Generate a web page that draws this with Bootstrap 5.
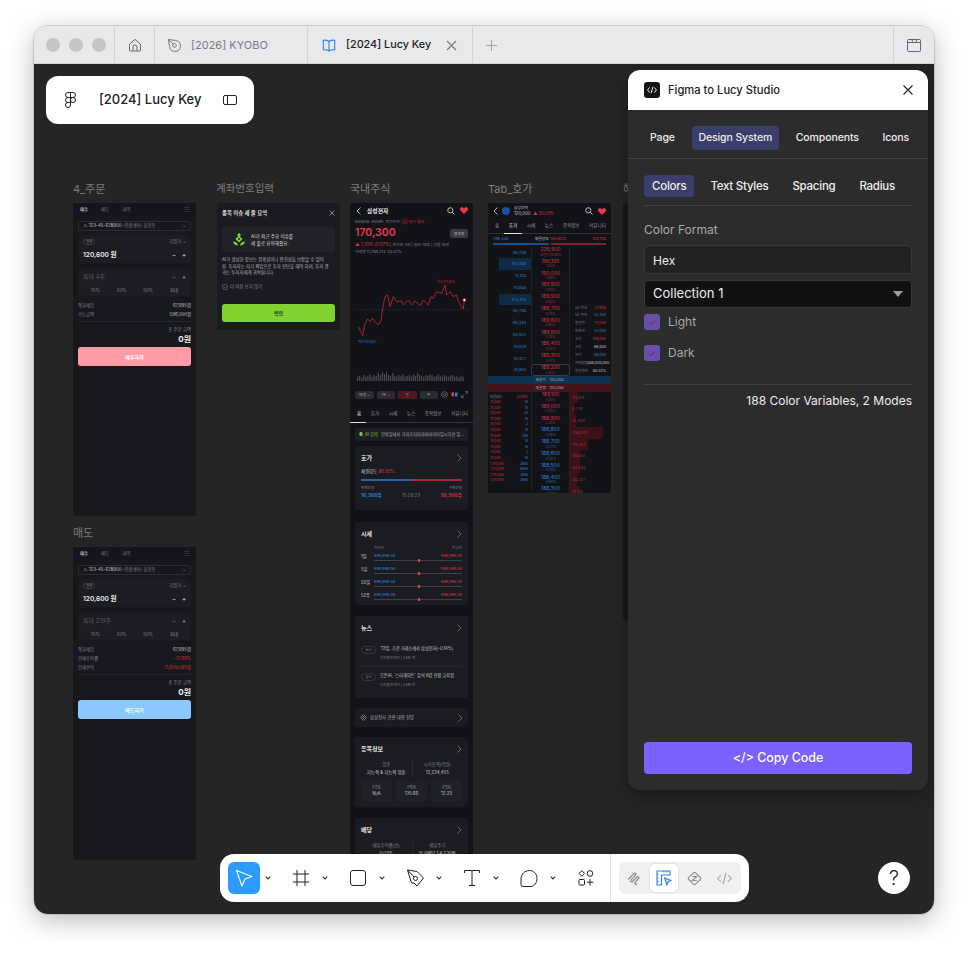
<!DOCTYPE html>
<html lang="ko">
<head>
<meta charset="UTF-8">
<title>[2024] Lucy Key</title>
<link href="https://cdn.jsdelivr.net/npm/bootstrap@5.3.0/dist/css/bootstrap.min.css" rel="stylesheet">
<style>
body { margin: 0; padding: 26px 34px; background: #fff; font-family: Inter, "Noto Sans CJK KR", sans-serif; }
svg { display: block; flex-shrink: 0; }
.app-window { width: 900px; height: 888px; border-radius: 14px; overflow: hidden; box-shadow: 0 6px 26px rgba(0,0,0,.28), 0 0 0 1px rgba(0,0,0,.12); }
.tabbar { height: 38px; padding-top: 1px; background: #e8e9eb; border-bottom: 1px solid #d2d3d5; font-size: 11px; }
.tb-cell { height: 100%; border-right: 1px solid #d2d3d5; }
.tb-lights { width: 81px; gap: 9px; padding-left: 12px; }
.tb-light { width: 14px; height: 14px; border-radius: 50%; background: #c4c5c7; }
.tb-home { width: 40px; }
.tb-tab1 { width: 153px; padding-left: 12px; gap: 9px; color: #7b7c7e; }
.tb-tab2 { width: 165px; padding-left: 14px; color: #222; font-weight: 500; font-size: 10.8px; }
.tb-tab2 .tab-title { margin-left: 10px; width: 100px; white-space: nowrap; }
.tb-right { width: 41px; border-left: 1px solid #d2d3d5; }
.stage { position: relative; height: 850px; background: #252525; overflow: hidden; }

.fr-wrap { position: absolute; width: 123px; top: 115px; }
.fr-label { font-size: 11px; line-height: 20px; height: 24px; color: #7d7d7d; white-space: nowrap; }
.fr { background: #17181c; border-radius: 2px; overflow: hidden; color: #c9cacc; font-size: 4.4px; line-height: 6px; white-space: nowrap; }
.fw-1 { left: 39px; } .fw-1 .fr { height: 313px; }
.fw-2 { left: 39px; top: 459px; } .fw-2 .fr { height: 313px; }
.fw-3 { left: 183px; } .fw-3 .fr { height: 127px; padding: 0 5px; background: #1a1b20; }
.fw-3 .fr-label { margin-left: -1px; font-size: 10.5px; }
.fw-4 { left: 316px; } .fw-4 .fr { height: 660px; background: #121317; }
.fw-5 { left: 454px; } .fw-5 .fr { height: 290px; background: #121317; }
.fw-6 { left: 589px; width: 5px; overflow: hidden; } .fw-6 .fr { height: 417px; }
.t-red { color: #d9304a; } .t-blue { color: #2f82d6; } .t-dim { color: #7d7e84; } .t-white { color: #eee; }

.of-tabs { height: 13px; background: #141519; padding: 0 6px 0 7px; gap: 13px; }
.of-body { padding: 0 5px; }
.of-acct { height: 10px; margin-top: 5px; border: 1px solid #2b2c31; border-radius: 2px; padding: 0 4px; }
.of-card { height: 28px; background: #1c1d22; border-radius: 3px; padding: 4px 5px; }
.of-card1 { margin-top: 4px; } .of-card2 { margin-top: 5px; }
.of-pill { width: 12px; height: 6px; line-height: 5px; border: 1px solid #3a3b40; border-radius: 3px; text-align: center; font-size: 3.4px; }
.of-price { font-size: 6.6px; font-weight: 600; color: #eee; line-height: 10px; margin-top: 5px; }
.of-max { font-size: 6px; color: #55565b; line-height: 10px; }
.of-pct { margin-top: 6px; color: #85868c; padding: 0 8px; }
.of-rows { margin-top: 5px; }
.of-row { height: 9px; line-height: 9px; }
.of-line { height: 1px; background: #26272c; margin-top: 2px; }
.of-sum { text-align: right; line-height: 8px; margin-top: 4px; }
.of-total { text-align: right; line-height: 11px; font-size: 8px; font-weight: 700; color: #eee; }
.of-btn { height: 19px; margin-top: 2px; border-radius: 3px; color: #fff; font-weight: 600; font-size: 5px; }
.of-buy { background: #ff9ba6; } .of-sell { background: #8ac8ff; }
.ctl { font-size: 6px; line-height: 6px; color: #bbb; }

.pop-head { height: 18px; padding-top: 2px; color: #ddd; font-size: 5.4px; font-weight: 600; }
.pop-box { height: 25px; margin-top: 6px; background: #212227; border-radius: 3px; padding-left: 11px; gap: 6px; font-size: 4.6px; line-height: 7px; color: #ddd; }
.pop-text { margin-top: 5px; line-height: 6.7px; font-size: 4.4px; color: #b5b6ba; }
.pop-check { margin-top: 7px; gap: 2px; color: #8a8b90; }
.pop-btn { height: 18px; margin-top: 14px; background: #7fd230; border-radius: 3px; color: #26351a; font-weight: 600; font-size: 5px; }

.st-head { height: 15px; padding: 0 5px 0 6px; }
.st-name { font-size: 5.8px; font-weight: 700; color: #eee; margin-left: 6px; }
.st-meta { padding: 0 5px; margin-top: 1px; line-height: 6px; font-size: 3.9px; color: #85868c; }
.st-price { padding: 0 5px; height: 14px; margin-top: 1px; }
.st-big { font-size: 10.5px; line-height: 14px; font-weight: 600; color: #e8394f; }
.st-state { width: 18px; height: 9px; line-height: 9px; background: #3a3b40; border-radius: 2px; text-align: center; font-size: 3.8px; }
.st-chart { margin-top: 6px; }
.st-ctrl { padding: 0 5px; margin-top: 8px; height: 9px; gap: 3px; }
.st-chip { width: 19px; height: 8px; line-height: 8px; border-radius: 2px; background: #2b2c31; text-align: center; font-size: 3.6px; color: #9a9ba0; }
.st-tabs { height: 17px; margin-top: 7px; padding: 0 5px 0 7px; font-size: 4.6px; border-bottom: 1px solid #303136; position: relative; color: #9a9ba0; }
.st-tabs::after { content: ""; position: absolute; left: 0; bottom: -1px; width: 16px; height: 1px; background: #ddd; }
.st-ai { margin: 5px 5px 0; height: 13px; background: #1e1f24; border-radius: 2px; padding: 0 4px; gap: 3px; color: #aaa; font-size: 4.2px; }
.st-card { margin: 5px 5px 0; background: #1b1c21; border-radius: 3px; padding: 0 6px; }
.st-title { height: 24px; font-size: 6px; font-weight: 700; color: #e2e2e2; }
.st-line { height: 2px; margin-top: 5px; background: linear-gradient(90deg, #2a63ad 50%, #a82a3a 50%); }
.st-range { height: 13px; position: relative; }
.st-vals { line-height: 6px; font-size: 3.9px; }
.st-track { height: 1px; margin-top: 1px; background: #404146; position: relative; }
.st-dot { position: absolute; left: 50%; top: -1px; width: 2px; height: 3px; background: #e8394f; }
.st-rlabel { width: 13px; font-size: 4.2px; color: #ccc; }
.st-news { height: 27px; padding-top: 6px; }
.st-tag { width: 15px; height: 8px; line-height: 7px; border: 1px solid #34353a; border-radius: 4px; text-align: center; font-size: 3.4px; margin-right: 4px; color: #85868c; }
.st-rowcard { height: 19px; padding: 0 5px; gap: 3px; color: #aaa; }
.st-half { width: 50%; text-align: center; line-height: 8px; }
.st-box { width: 31px; height: 20px; background: #202126; border-radius: 3px; text-align: center; padding-top: 4px; line-height: 6px; }

.ho-head { height: 16px; padding: 0 5px; gap: 3px; }
.ho-logo { width: 8px; height: 8px; border-radius: 50%; background: #1c4da1; margin-left: 1px; }
.ho-tabs { height: 15px; padding: 0 5px 0 7px; border-bottom: 1px solid #303136; position: relative; color: #9a9ba0; font-size: 4.6px; }
.ho-tabs::after { content: ""; position: absolute; left: 16px; bottom: -1px; width: 18px; height: 1px; background: #ddd; }
.ho-stat { padding: 2px 5px 0; line-height: 6px; font-size: 3.9px; }
.ho-bars { margin: 1px 5px 0; height: 1.5px; gap: 2px; }
.ho-bars span { flex: 1; }
.ho-book { display: grid; grid-template-columns: 43px 39px 41px; height: 129px; margin-top: 2px; }
.ho-amt { height: 11.8px; line-height: 11.8px; text-align: right; padding-right: 5px; color: #2f82d6; font-size: 4px; }
.ho-amt.is-big { background: linear-gradient(270deg, #0e2a44 32px, transparent 32px); }
.ho-pr { height: 11.8px; text-align: center; line-height: 5.6px; padding-top: .5px; font-size: 5px; color: #d9304a; border-left: 1px solid #222; border-right: 1px solid #222; }
.ho-pr small { display: block; font-size: 3.2px; color: #a12a3d; }
.ho-pr.is-blue { color: #2f82d6; } .ho-pr.is-blue small { color: #2a6cae; }
.ho-pr.is-cur { outline: 1px solid #3a3b40; outline-offset: -1px; border-radius: 3px; }
.ho-info { padding: 58px 5px 0; font-size: 3.6px; }
.ho-info > div { height: 7.9px; line-height: 7.9px; }
.ho-band { height: 8px; line-height: 8px; text-align: center; font-size: 3.9px; color: #aaa; }
.ho-band1 { background: #0d3350; } .ho-band2 { background: #45131b; }
.ho-lower { display: grid; grid-template-columns: 43px 39px 41px; }
.ho-tr { padding: 3px 3px 0 2px; font-size: 3.2px; }
.ho-tr > div { height: 5.6px; line-height: 5.6px; }
.ho-ask { height: 11.8px; line-height: 11.8px; padding-left: 2px; font-size: 4px; color: #a83345; }

.float-pill { position: absolute; left: 12px; top: 12px; width: 208px; height: 48px; background: #fff; border-radius: 12px; padding-left: 19px; font-size: 13px; font-weight: 500; color: #222; }
.float-pill .pill-title { margin-left: 23px; width: 124px; white-space: nowrap; }

.lucy { position: absolute; left: 594px; top: 6px; width: 300px; height: 720px; border-radius: 12px; overflow: hidden; background: #2c2c2c; box-shadow: 0 6px 20px rgba(0,0,0,.35); color: #eee; font-size: 11.5px; }
.lucy-head { height: 40px; background: #fff; padding: 0 15px 0 16px; color: #222; font-weight: 500; font-size: 11.2px; }
.lucy-logo { width: 16px; height: 16px; border-radius: 3px; background: #141414; margin-right: 8px; }
.lucy-tabs { padding: 16px 0 8px 15.5px; gap: 10.5px; border-bottom: 1px solid #414141; font-weight: 500; font-size: 10.5px; letter-spacing: -.1px; }
.lucy-tab { height: 24px; line-height: 24px; padding: 0 6.5px; border-radius: 4px; white-space: nowrap; }
.lucy-tab.is-on { background: #3b3d6b; }
.lucy-body { padding: 16px; height: 631px; }
.lucy-sub { gap: 8px; padding-bottom: 8px; border-bottom: 1px solid #414141; font-weight: 500; letter-spacing: -.25px; }
.lucy-subtab { height: 22px; line-height: 22px; padding: 0 8px; border-radius: 4px; white-space: nowrap; }
.lucy-sub .is-on { background: #3b3d6b; }
.lucy-label { margin-top: 15px; line-height: 18px; color: #a9a9a9; font-size: 12px; }
.lucy-input { margin-top: 6px; height: 29px; line-height: 29px; padding: 0 8px; background: #222; border: 1px solid #383838; border-radius: 4px; font-size: 12px; }
.lucy-select { margin-top: 6px; height: 28px; padding: 0 8px; background: #111; border: 1px solid #383838; border-radius: 4px; font-size: 13px; }
.lucy-caret { width: 0; height: 0; border: 5px solid transparent; border-top: 6px solid #a0a0a0; border-bottom: 0; }
.lucy-check { gap: 8px; color: #a9a9a9; height: 16px; font-size: 12px; }
.lucy-box { width: 16px; height: 16px; border-radius: 3px; background: #6650a8; }
.lucy-rule { height: 1px; background: #414141; margin-top: 23px; }
.lucy-count { margin-top: 7px; line-height: 18px; text-align: right; font-size: 12px; }
.lucy-copy { margin-top: auto; height: 32px; padding-top: 1px; border-radius: 4px; background: #7b61ff; color: #fff; font-size: 12.4px; font-weight: 500; }

.toolbar { position: absolute; left: 186px; top: 790px; width: 529px; height: 48px; background: #fff; border-radius: 14px; padding-left: 8px; gap: 9px; }
.tool { width: 32px; height: 32px; border-radius: 6px; }
.tool.is-on { background: #2b9bff; }
.tool-set { display: flex; align-items: center; }
.tool-drop { width: 16px; }
.tool-sep { width: 1px; height: 48px; background: #e4e4e4; margin-left: -1px; }
.mode-set { width: 122px; height: 32px; margin-left: -1px; background: #f0f0f0; border-radius: 6px; }
.mode { width: 30px; height: 32px; }
.mode.is-on { position: relative; }
.mode.is-on::before { content: ""; position: absolute; inset: 2px 1px; background: #fff; border-radius: 5px; box-shadow: 0 0 2px rgba(0,0,0,.2); }
.mode svg { position: relative; }
.help-btn { position: absolute; left: 844px; top: 798px; width: 32px; height: 32px; border-radius: 50%; background: #fff; color: #222; font-size: 20px; font-weight: 300; }
</style>
</head>
<body>
<div class="app-window">
  <!-- tab bar -->
  <div class="tabbar d-flex align-items-center">
    <div class="tb-cell tb-lights d-flex align-items-center"><span class="tb-light"></span><span class="tb-light"></span><span class="tb-light"></span></div>
    <div class="tb-cell tb-home d-flex align-items-center justify-content-center">
      <svg width="14" height="14" viewBox="0 0 14 14" fill="none" stroke="#6a6a6c" stroke-width="1"><path d="M1.5 6.2 7 1.4l5.500 4.800V12a1 1 0 0 1-1 1H2.500a1 1 0 0 1-1-1z"/><path d="M5 13V9a2 2 0 0 1 4 0v4"/></svg>
    </div>
    <div class="tb-cell tb-tab1 d-flex align-items-center">
      <svg width="15" height="15" viewBox="0 0 15 15" fill="none" stroke="#77787a" stroke-width="1"><path d="M1.500 1.500 9 2.500a5.500 5.500 0 1 1-6.500 6z"/><path d="M1.500 1.500 6 6"/><circle cx="7.500" cy="7.500" r="1.800"/></svg>
      <span>[2026] KYOBO</span>
    </div>
    <div class="tb-cell tb-tab2 d-flex align-items-center">
      <svg width="14" height="13" viewBox="0 0 14 13" fill="none" stroke="#2f80e8" stroke-width="1.100"><path d="M7 2.500C5.500 1.200 3.500 1 1.300 1.200v9.600c2.200-.2 4.200 0 5.700 1.200 1.500-1.200 3.500-1.400 5.700-1.200V1.200C10.500 1 8.500 1.200 7 2.500zM7 2.500V12"/></svg>
      <span class="tab-title">[2024] Lucy Key</span>
      <svg width="11" height="11" viewBox="0 0 11 11" stroke="#77787a" stroke-width="1.100"><path d="m1 1 9 9M10 1l-9 9"/></svg>
    </div>
    <div class="flex-grow-1 d-flex align-items-center" style="padding-left:13px">
      <svg width="11" height="11" viewBox="0 0 11 11" stroke="#a6a7a9" stroke-width="1.100"><path d="M5.500 0v11M0 5.500h11"/></svg>
    </div>
    <div class="tb-cell tb-right d-flex align-items-center justify-content-center" style="border-right:0">
      <svg width="14" height="13" viewBox="0 0 14 13" fill="none" stroke="#66676a" stroke-width="1"><rect x=".5" y=".5" width="13" height="12" rx="1"/><path d="M.5 3.500h13M5 .5l.6 3H9l.5-3"/></svg>
    </div>
  </div>

  <div class="stage">
    <!-- canvas frames -->
    <div class="fr-wrap fw-1"><div class="fr-label">4_주문</div><div class="fr" id="orderBuy"></div></div>
    <div class="fr-wrap fw-2"><div class="fr-label">매도</div><div class="fr" id="orderSell"></div></div>

    <div class="fr-wrap fw-3">
      <div class="fr-label">계좌번호입력</div>
      <div class="fr">
        <div class="pop-head d-flex align-items-center justify-content-between">
          <span>종목 이슈 세 줄 요약</span>
          <svg width="6" height="6" viewBox="0 0 6 6" stroke="#bbb" stroke-width=".7"><path d="m.5.5 5 5M5.500.5l-5 5"/></svg>
        </div>
        <div class="pop-box d-flex align-items-center">
          <svg width="12" height="13" viewBox="0 0 12 13" fill="#7fd230"><path d="M6 0 8 2 6 4 4 2z"/><path fill-rule="evenodd" d="M6 2.500 9.500 6 6 9.500 2.500 6zM6 4.800 4.800 6 6 7.200 7.200 6z"/><path d="M0 8.500c2.500 0 4.500 1.200 5 4C2.500 12.500.5 11 0 8.500zM12 8.500c-2.500 0-4.500 1.200-5 4 2.500 0 4.500-1.500 5-4z"/></svg>
          <div>AI가 최근 주요 이슈를<br>세 줄로 요약해줬요.</div>
        </div>
        <div class="pop-text">AI가 생성한 정보는 정확성이나 완전성을 보장할 수 없어<br>요. 투자자는 자기 책임으로 투자 판단을 해야 하며, 투자 결<br>과는 투자자에게 귀속됩니다.</div>
        <div class="pop-check d-flex align-items-center">
          <svg width="6" height="6" viewBox="0 0 6 6" fill="none" stroke="#8a8b90" stroke-width=".5"><circle cx="3" cy="3" r="2.600"/><path d="m1.800 3 .9.9 1.500-1.500"/></svg>
          <span>더 이상 보지 않기</span>
        </div>
        <div class="pop-btn d-flex align-items-center justify-content-center">확인</div>
      </div>
    </div>

    <div class="fr-wrap fw-4">
      <div class="fr-label">국내주식</div>
      <div class="fr">
        <div class="st-head d-flex align-items-center">
          <svg width="5" height="8" viewBox="0 0 5 8" fill="none" stroke="#ddd" stroke-width=".8"><path d="M4.500.5 1 4l3.500 3.500"/></svg>
          <span class="st-name">삼성전자</span>
          <svg class="ms-auto" width="8" height="8" viewBox="0 0 8 8" fill="none" stroke="#ddd" stroke-width=".8"><circle cx="3.300" cy="3.300" r="2.600"/><path d="m5.300 5.300 2.300 2.300"/></svg>
          <svg style="margin-left:5px" width="8" height="7" viewBox="0 0 8 7" fill="#e8394f"><path d="M4 7 .6 3.600a2 2 0 0 1 0-2.800 2 2 0 0 1 2.800 0L4 1.400l.6-.6a2 2 0 0 1 2.800 0 2 2 0 0 1 0 2.800z"/></svg>
        </div>
        <div class="st-meta">005930 &nbsp;KOSPI &nbsp;전기전자 &nbsp;<span class="t-red">⊕ 위기 경고</span></div>
        <div class="st-price d-flex align-items-center justify-content-between"><span class="st-big">170,300</span><span class="st-state">정규장</span></div>
        <div class="st-meta" style="margin-top:2px"><span class="t-red" style="font-size:4.600px">▲ 1,000 (0.57%)</span> 현가권 3위 | 일보 14位 | 선물 10위</div>
        <div class="st-meta">거래량 11,789,213 &nbsp;20.27%</div>
        <svg class="st-chart" width="123" height="121" viewBox="15 258 369 363">
          <path d="M30 404H370" stroke="#44454a" stroke-width="1.500" stroke-dasharray="3 4" fill="none"/>
          <path fill="none" stroke="#c9263f" stroke-width="2.400" stroke-linejoin="round" d="M40 455 53 482 60 445 68 432 75 440 82 430 90 440 100 450 108 438 113 400 120 365 128 360 135 395 145 365 155 380 170 378 175 390 190 375 200 390 210 378 225 392 235 375 250 390 258 365 265 370 275 350 290 355 300 330 305 360 315 350 325 365 335 360 340 380 350 395 355 402 358 375"/>
          <circle cx="358" cy="375" r="4" fill="#fff" stroke="#e8394f" stroke-width="2"/>
          <text x="302" y="325" text-anchor="middle" font-size="9" fill="#c9263f">최고 170,800</text>
          <text x="66" y="503" text-anchor="middle" font-size="9" fill="#2f82d6">최저 150,600</text>
          <g id="volBars" fill="#4b4c51"></g>
        </svg>
        <div class="st-ctrl d-flex align-items-center">
          <span class="st-chip">1분봉 ⌄</span><span class="st-chip">1분 ⌄</span>
          <span class="st-chip" style="background:#4a1a20">일</span><span class="st-chip">주</span>
          <svg class="ms-auto" width="7" height="7" viewBox="0 0 7 7" fill="none" stroke="#888" stroke-width=".6"><path d="M3.500.4 6.200 2v3L3.500 6.600.8 5V2z"/><circle cx="3.500" cy="3.500" r="1"/></svg>
          <svg width="7" height="7" viewBox="0 0 7 7"><rect x=".5" y="1.500" width="2.500" height="4" rx=".6" fill="#e8394f"/><rect x="4" y="1.500" width="2.500" height="4" rx=".6" fill="#2f82d6"/></svg>
          <svg width="7" height="7" viewBox="0 0 7 7" fill="none" stroke="#888" stroke-width=".6"><path d="M4.300.5h2.200v2.200M6.500.5 4 3M2.700 6.500H.5V4.300M.5 6.500 3 4"/></svg>
        </div>
        <div class="st-tabs d-flex align-items-center justify-content-between"><span class="t-white">홈</span><span>호가</span><span>시세</span><span>뉴스</span><span>종목정보</span><span>커뮤니티</span></div>
        <div class="st-ai d-flex align-items-center"><span style="color:#8bc34a">●, AI 요약</span><span>모바일에서 가져가지마마마마마마일시지만 일...</span></div>

        <div class="st-card" style="height:64px">
          <div class="st-title d-flex align-items-center justify-content-between"><span>호가</span><svg width="5" height="8" viewBox="0 0 5 8" fill="none" stroke="#888" stroke-width=".7"><path d="m.5.5 3.500 3.500-3.500 3.500"/></svg></div>
          <div style="line-height:4px">체결강도 <span class="t-red">86.92%</span></div>
          <div class="st-line"></div>
          <div class="d-flex justify-content-between align-items-end" style="margin-top:4px;line-height:7px">
            <div><div class="t-dim" style="font-size:3.600px">판매잔량</div><div class="t-blue" style="font-size:5px;font-weight:600">16,366주</div></div>
            <div class="t-dim">15:29:23</div>
            <div class="text-end"><div class="t-dim" style="font-size:3.600px">구매잔량</div><div class="t-red" style="font-size:5px;font-weight:600">36,366주</div></div>
          </div>
        </div>

        <div class="st-card" style="height:83px;margin-top:12px">
          <div class="st-title d-flex align-items-center justify-content-between"><span>시세</span><svg width="5" height="8" viewBox="0 0 5 8" fill="none" stroke="#888" stroke-width=".7"><path d="m.5.5 3.500 3.500-3.500 3.500"/></svg></div>
          <div class="d-flex justify-content-between t-dim" style="padding-left:13px;font-size:3.600px;line-height:4px"><span>최저가</span><span>최고가</span></div>
          <div id="rangeRows"></div>
        </div>

        <div class="st-card" style="height:82px;margin-top:11px">
          <div class="st-title d-flex align-items-center justify-content-between"><span>뉴스</span><svg width="5" height="8" viewBox="0 0 5 8" fill="none" stroke="#888" stroke-width=".7"><path d="m.5.5 3.500 3.500-3.500 3.500"/></svg></div>
          <div class="st-news d-flex" style="border-bottom:1px solid #26272c"><span class="st-tag">뉴스</span><div><div style="font-size:4.200px">'13일, 기관 거래소에서 삼성전자(-0.14%)</div><div class="t-dim" style="font-size:3.600px;margin-top:3px">디지털투데이 | 34분 전</div></div></div>
          <div class="st-news d-flex"><span class="st-tag">공시</span><div><div style="font-size:4.200px">오픈AI, '스타게이트' 참석 8강 연합 교육장</div><div class="t-dim" style="font-size:3.600px;margin-top:3px">디지털투데이 | 24분 전</div></div></div>
        </div>

        <div class="st-card st-rowcard d-flex align-items-center" style="margin-top:10px">
          <svg width="7" height="7" viewBox="0 0 7 7" fill="none" stroke="#999" stroke-width=".7"><path d="M3.500.5 6.500 3.500 3.500 6.500.5 3.500z"/><circle cx="3.500" cy="3.500" r=".8"/></svg>
          <span>삼성전자 관련 내용 전망</span>
          <svg class="ms-auto" width="5" height="8" viewBox="0 0 5 8" fill="none" stroke="#888" stroke-width=".7"><path d="m.5.5 3.500 3.500-3.500 3.500"/></svg>
        </div>

        <div class="st-card" style="height:70px;margin-top:10px">
          <div class="st-title d-flex align-items-center justify-content-between"><span>종목정보</span><svg width="5" height="8" viewBox="0 0 5 8" fill="none" stroke="#888" stroke-width=".7"><path d="m.5.5 3.500 3.500-3.500 3.500"/></svg></div>
          <div class="d-flex"><div class="st-half"><div class="t-dim">업종</div><div>지능적 &amp; 지능적 위톤</div></div><div class="st-half" style="border-left:1px solid #2a2b30"><div class="t-dim">시가총액(억원)</div><div>12,234,455</div></div></div>
          <div class="d-flex justify-content-between" style="margin-top:4px">
            <div class="st-box"><div class="t-dim">PER</div><div>N/A</div></div>
            <div class="st-box"><div class="t-dim">PBR</div><div>135.66</div></div>
            <div class="st-box"><div class="t-dim">PSR</div><div>12.23</div></div>
          </div>
        </div>

        <div class="st-card" style="height:50px;margin-top:11px">
          <div class="st-title d-flex align-items-center justify-content-between"><span>배당</span><svg width="5" height="8" viewBox="0 0 5 8" fill="none" stroke="#888" stroke-width=".7"><path d="m.5.5 3.500 3.500-3.500 3.500"/></svg></div>
          <div class="d-flex"><div class="st-half"><div class="t-dim">배당수익률(연)</div><div>0.03%</div></div><div class="st-half" style="border-left:1px solid #2a2b30"><div class="t-dim">배당주기</div><div>분기배당 1·4·7·10월</div></div></div>
        </div>
      </div>
    </div>

    <div class="fr-wrap fw-5">
      <div class="fr-label">Tab_호가</div>
      <div class="fr">
        <div class="ho-head d-flex align-items-center">
          <svg width="5" height="8" viewBox="0 0 5 8" fill="none" stroke="#ddd" stroke-width=".8"><path d="M4.500.5 1 4l3.500 3.500"/></svg>
          <span class="ho-logo"></span>
          <div style="line-height:6px;margin-left:1px"><div style="font-size:3.800px">삼성전자</div><div style="font-size:4.400px">120,000 &nbsp;<span class="t-red">▲ 20.01%</span></div></div>
          <svg class="ms-auto" width="8" height="8" viewBox="0 0 8 8" fill="none" stroke="#ddd" stroke-width=".8"><circle cx="3.300" cy="3.300" r="2.600"/><path d="m5.300 5.300 2.300 2.300"/></svg>
          <svg style="margin-left:2px" width="8" height="7" viewBox="0 0 8 7" fill="#e8394f"><path d="M4 7 .6 3.600a2 2 0 0 1 0-2.800 2 2 0 0 1 2.800 0L4 1.400l.6-.6a2 2 0 0 1 2.800 0 2 2 0 0 1 0 2.800z"/></svg>
        </div>
        <div class="ho-tabs d-flex align-items-center justify-content-between"><span>홈</span><span class="t-white">호가</span><span>시세</span><span>뉴스</span><span>종목정보</span><span>커뮤니티</span></div>
        <div class="ho-stat d-flex justify-content-between"><span class="t-blue">799,338</span><span>체결강도 <span class="t-red">165.83%</span></span><span class="t-red">120,150</span></div>
        <div class="ho-bars d-flex"><span style="background:#1e4f80"></span><span style="background:#7a2130"></span></div>
        <div class="ho-book">
          <div id="sellAmts"></div>
          <div id="sellPrices"></div>
          <div class="ho-info" id="infoList"></div>
        </div>
        <div class="ho-band ho-band1">체결가 &nbsp;&nbsp;120,500</div>
        <div class="ho-band ho-band2">체결량 &nbsp;&nbsp;120,558</div>
        <div class="ho-lower">
          <div class="ho-tr" id="tradeList"></div>
          <div id="buyPrices"></div>
          <div id="buyAmts"></div>
        </div>
      </div>
    </div>

    <div class="fr-wrap fw-6"><div class="fr-label">해</div><div class="fr"></div></div>

    <!-- file pill -->
    <div class="float-pill d-flex align-items-center">
      <svg width="11" height="16" viewBox="0 0 11 16" fill="none" stroke="#222" stroke-width="1"><path d="M5.500.5H3a2.500 2.500 0 0 0 0 5h2.500zM5.500.5H8a2.500 2.500 0 0 1 0 5H5.500zM5.500 5.500H3a2.500 2.500 0 0 0 0 5h2.500z"/><circle cx="8" cy="8" r="2.500"/><path d="M5.500 10.500H3A2.500 2.500 0 1 0 5.500 13z"/></svg>
      <span class="pill-title">[2024] Lucy Key</span>
      <svg width="14" height="10" viewBox="0 0 14 10" fill="none" stroke="#222" stroke-width="1"><rect x=".5" y=".5" width="13" height="9" rx="1.500"/><path d="M4.500.5v9"/></svg>
    </div>

    <!-- plugin panel -->
    <div class="lucy d-flex flex-column">
      <div class="lucy-head d-flex align-items-center">
        <span class="lucy-logo d-flex align-items-center justify-content-center">
          <svg width="10" height="8" viewBox="0 0 10 8" fill="none" stroke="#fff" stroke-width=".9"><path d="M2.500 1.500 .6 4l1.900 2.500M7.500 1.500 9.400 4 7.500 6.500M6 .8 4 7.200"/></svg>
        </span>
        <span>Figma to Lucy Studio</span>
        <svg class="ms-auto" width="10" height="10" viewBox="0 0 10 10" stroke="#222" stroke-width="1.100"><path d="m.5.5 9 9M9.500.5l-9 9"/></svg>
      </div>
      <div class="lucy-tabs d-flex">
        <span class="lucy-tab">Page</span><span class="lucy-tab is-on">Design System</span><span class="lucy-tab">Components</span><span class="lucy-tab">Icons</span>
      </div>
      <div class="lucy-body d-flex flex-column">
        <div class="lucy-sub d-flex">
          <span class="lucy-subtab is-on">Colors</span><span class="lucy-subtab">Text Styles</span><span class="lucy-subtab">Spacing</span><span class="lucy-subtab">Radius</span>
        </div>
        <div class="lucy-label">Color Format</div>
        <div class="lucy-input">Hex</div>
        <div class="lucy-select d-flex align-items-center justify-content-between"><span>Collection 1</span><span class="lucy-caret"></span></div>
        <div class="lucy-check d-flex align-items-center" style="margin-top:6px">
          <span class="lucy-box d-flex align-items-center justify-content-center"><svg width="8" height="7" viewBox="0 0 8 7" fill="none" stroke="#3b2f66" stroke-width="1"><path d="m1 3.500 2 2 4-4"/></svg></span>Light
        </div>
        <div class="lucy-check d-flex align-items-center" style="margin-top:15px">
          <span class="lucy-box d-flex align-items-center justify-content-center"><svg width="8" height="7" viewBox="0 0 8 7" fill="none" stroke="#3b2f66" stroke-width="1"><path d="m1 3.500 2 2 4-4"/></svg></span>Dark
        </div>
        <div class="lucy-rule"></div>
        <div class="lucy-count">188 Color Variables, 2 Modes</div>
        <div class="lucy-copy d-flex align-items-center justify-content-center">&lt;/&gt; Copy Code</div>
      </div>
    </div>

    <!-- bottom toolbar -->
    <div class="toolbar d-flex align-items-center">
      <div class="tool-set">
        <span class="tool is-on d-flex align-items-center justify-content-center"><svg width="20" height="20" viewBox="0 0 20 20" fill="none" stroke="#fff" stroke-width="1.100" stroke-linejoin="round"><path d="M2.500 2.500 18 8.500l-7 2.500-3 7z"/></svg></span>
        <span class="tool-drop d-flex justify-content-center"><svg width="6" height="4" viewBox="0 0 6 4" fill="none" stroke="#333" stroke-width="1.100"><path d="m.7.700 2.300 2.300L5.300.7"/></svg></span>
      </div>
      <div class="tool-set">
        <span class="tool d-flex align-items-center justify-content-center"><svg width="16" height="16" viewBox="0 0 16 16" fill="none" stroke="#222" stroke-width="1"><path d="M4 0v16M12 0v16M0 4h16M0 12h16"/></svg></span>
        <span class="tool-drop d-flex justify-content-center"><svg width="6" height="4" viewBox="0 0 6 4" fill="none" stroke="#333" stroke-width="1.100"><path d="m.7.700 2.300 2.300L5.300.7"/></svg></span>
      </div>
      <div class="tool-set">
        <span class="tool d-flex align-items-center justify-content-center"><svg width="16" height="16" viewBox="0 0 16 16" fill="none" stroke="#222" stroke-width="1"><rect x=".5" y=".5" width="15" height="15" rx="2.500"/></svg></span>
        <span class="tool-drop d-flex justify-content-center"><svg width="6" height="4" viewBox="0 0 6 4" fill="none" stroke="#333" stroke-width="1.100"><path d="m.7.700 2.300 2.300L5.300.7"/></svg></span>
      </div>
      <div class="tool-set">
        <span class="tool d-flex align-items-center justify-content-center"><svg width="19" height="18" viewBox="0 0 19 18" fill="none" stroke="#222" stroke-width="1" stroke-linejoin="round"><path d="M1.500 1 11 2.500 17.500 9l-6.500 8-3-3H5.500z"/><path d="M1.500 1 8 8"/><circle cx="9.500" cy="9.500" r="2"/></svg></span>
        <span class="tool-drop d-flex justify-content-center"><svg width="6" height="4" viewBox="0 0 6 4" fill="none" stroke="#333" stroke-width="1.100"><path d="m.7.700 2.300 2.300L5.300.7"/></svg></span>
      </div>
      <div class="tool-set">
        <span class="tool d-flex align-items-center justify-content-center"><svg width="16" height="16" viewBox="0 0 16 16" fill="none" stroke="#222" stroke-width="1"><path d="M.5 3V.5h15V3M8 .5v15M5 15.500h6"/></svg></span>
        <span class="tool-drop d-flex justify-content-center"><svg width="6" height="4" viewBox="0 0 6 4" fill="none" stroke="#333" stroke-width="1.100"><path d="m.7.700 2.300 2.300L5.300.7"/></svg></span>
      </div>
      <div class="tool-set">
        <span class="tool d-flex align-items-center justify-content-center"><svg width="18" height="17" viewBox="0 0 18 17" fill="none" stroke="#222" stroke-width="1"><path d="M9.500.5c4 0 7.500 3 7.500 8 0 4-2.500 8-6 8H3a2 2 0 0 1-2-2V9C1 4 5 .5 9.500.5z"/></svg></span>
        <span class="tool-drop d-flex justify-content-center"><svg width="6" height="4" viewBox="0 0 6 4" fill="none" stroke="#333" stroke-width="1.100"><path d="m.7.700 2.300 2.300L5.300.7"/></svg></span>
      </div>
      <span class="tool d-flex align-items-center justify-content-center"><svg width="16" height="16" viewBox="0 0 16 16" fill="none" stroke="#222" stroke-width="1"><path d="M3.800.7 6.600 3.500 3.800 6.300 1 3.500z"/><circle cx="12" cy="3.500" r="2.800"/><rect x="1" y="9.500" width="5.500" height="5.500" rx="1"/><path d="M12 9v6.500M9 12.200h6.500"/></svg></span>
      <span class="tool-sep"></span>
      <div class="mode-set d-flex align-items-center">
        <span class="mode d-flex align-items-center justify-content-center"><svg width="15" height="15" viewBox="0 0 15 15" fill="none" stroke="#8b8b8b" stroke-width="1.200" stroke-linecap="round"><path d="M1.500 8 7 2.500c1.500-1 2.500.5 1.500 1.500L4 9c-1 1.500.5 2.500 1.500 1.500L10 6c1.500-1 2.500.5 1.500 1.500L8 11.500c-.8 1.200.5 2.300 1.800 1.500"/></svg></span>
        <span class="mode is-on d-flex align-items-center justify-content-center"><svg width="16" height="16" viewBox="0 0 16 16" fill="none" stroke="#2f7fe0" stroke-width="1.100"><path d="M1 1h13v4H5.500v10H1zM1 4h1.500M1 8h1.500M1 11.500h1.500M8 1v1.500M11 1v1.500"/><path d="M8.500 8 15 10.500 12 12l-1 3z" fill="#cfe3fb"/></svg></span>
        <span class="mode d-flex align-items-center justify-content-center"><svg width="15" height="15" viewBox="0 0 15 15" fill="none" stroke="#8b8b8b" stroke-width="1.100"><rect x="2.700" y="2.700" width="9.600" height="9.600" rx="1.500" transform="rotate(45 7.500 7.500)"/><path d="M5.200 5.500h4.600L5.200 9.500h4.600"/></svg></span>
        <span class="mode d-flex align-items-center justify-content-center"><svg width="15" height="13" viewBox="0 0 15 13" fill="none" stroke="#a3a3a3" stroke-width="1.100"><path d="M4 3 .8 6.500 4 10M11 3l3.200 3.500L11 10M9 .8 6 12.200"/></svg></span>
      </div>
    </div>

    <div class="help-btn d-flex align-items-center justify-content-center">?</div>
  </div>
</div>

<script src="https://cdn.jsdelivr.net/npm/bootstrap@5.3.0/dist/js/bootstrap.bundle.min.js"></script>
<script>
// order form frames
function orderForm(o) {
  const rows = o.rows.map(r => `<div class="of-row d-flex justify-content-between"><span class="t-dim">${r[0]}</span><span class="${r[2] || ''}">${r[1]}</span></div>`).join('');
  return `
  <div class="of-tabs d-flex align-items-center"><span class="t-white">매수</span><span class="t-dim">매도</span><span class="t-dim">내역</span>
    <svg class="ms-auto" width="6" height="5" viewBox="0 0 6 5" stroke="#44454a" stroke-width=".5"><path d="M0 .5h6M0 2.500h6M0 4.500h6"/></svg></div>
  <div class="of-body">
    <div class="of-acct d-flex align-items-center justify-content-between"><span><span class="t-dim">△</span> 123-45-678900 <span class="t-dim">[종합계좌] 홍길동</span></span><span class="t-dim">⌄</span></div>
    <div class="of-card of-card1">
      <div class="d-flex justify-content-between align-items-center"><span class="of-pill t-dim">현재</span><span class="t-dim">지정가 ⌄</span></div>
      <div class="of-price d-flex justify-content-between align-items-center"><span>120,600 원</span><span class="ctl d-flex" style="gap:6px"><span>−</span><span>+</span></span></div>
    </div>
    <div class="of-card of-card2">
      <div class="of-max d-flex justify-content-between align-items-center"><span>${o.max}</span><span class="ctl d-flex" style="gap:6px"><span class="t-dim">−</span><span>+</span></span></div>
      <div class="of-pct d-flex justify-content-between"><span>10%</span><span>20%</span><span>50%</span><span>최대</span></div>
    </div>
    <div class="of-rows">${rows}</div>
    <div class="of-line"></div>
    <div class="of-sum t-dim">총 주문 금액</div>
    <div class="of-total">0원</div>
    <div class="of-btn ${o.cls} d-flex align-items-center justify-content-center">${o.btn}</div>
  </div>`;
}
document.getElementById('orderBuy').innerHTML = orderForm({ max: '최대 4주', btn: '매수하기', cls: 'of-buy',
  rows: [['평균매입', '67,995원'], ['가능금액', '596,000원']] });
document.getElementById('orderSell').innerHTML = orderForm({ max: '최대 219주', btn: '매도하기', cls: 'of-sell',
  rows: [['평균매입', '67,995원'], ['판매수익률', '-77.99%', 't-red'], ['판매손익', '-11,609,095원', 't-red']] });

// volume bars under the chart
const volHeights = [5,6,4,7,5,6,8,5,7,6,9,7,10,8,11,7,6,9,6,5,7,6,8,5,6,7,5,8,6,9,7,6,5,7,6,8,7,5,6,8,6,5,7,6,5,6,7,5,6,4,6,5];
document.getElementById('volBars').innerHTML = volHeights.map((h, i) =>
  `<rect x="${36 + i * 6.2}" y="${618 - h * 2.6}" width="3.600" height="${h * 2.6}"/>`).join('');

// range rows
document.getElementById('rangeRows').innerHTML = ['1일', '5일', '20일', '52주'].map(l => `
  <div class="st-range d-flex align-items-center">
    <span class="st-rlabel">${l}</span>
    <div class="flex-grow-1">
      <div class="st-vals d-flex justify-content-between"><span class="t-blue">999,999.59</span><span class="t-red">999,999.59</span></div>
      <div class="st-track"><span class="st-dot"></span></div>
    </div>
  </div>`).join('');

// order book
const sellBook = [
  ['46,709', '235,900', '상한가 24.66%'], ['167,058', '190,100', '1.02%', 1], ['13,128', '190,000', '0.96%'],
  ['14,808', '189,900', '0.91%'], ['373,410', '189,900', '0.85%', 1], ['46,708', '189,700', '0.79%'],
  ['69,343', '189,600', '0.65%'], ['40,622', '189,500', '0.58%'], ['79,629', '189,400', '0.52%'],
  ['10,427', '189,300', '0.47%'], ['31,063', '189,200', '0.41%']
];
document.getElementById('sellAmts').innerHTML = sellBook.map(r => `<div class="ho-amt ${r[3] ? 'is-big' : ''}">${r[0]}</div>`).join('');
document.getElementById('sellPrices').innerHTML = sellBook.map((r, i) =>
  `<div class="ho-pr ${i === 10 ? 'is-cur' : ''}">${r[1]}<small>${r[2]}</small></div>`).join('');

const info = [
  ['52 최고', '77,900', 't-red'], ['52 최저', '53,400', 't-blue'], ['동일가', '77,500', 't-red'],
  ['하한가', '53,500', 't-blue'], ['고가', '199,800', 't-red'], ['시작', '88,000', ''],
  ['저가', '48,000', 't-blue'], ['거래량', '1,066,000,000', ''], ['전일대비', '80.32%', '']
];
document.getElementById('infoList').innerHTML = info.map(r =>
  `<div class="d-flex justify-content-between"><span class="t-dim">${r[0]}</span><span class="${r[2]}">${r[1]}</span></div>`).join('');

const trades = ['16','16','54','16','3','16','266','16','16','3','16','2665','6668','2668','2665'];
document.getElementById('tradeList').innerHTML =
  '<div class="d-flex justify-content-between"><span class="t-dim">체결강도</span><span class="t-red">87.50%</span></div>' +
  trades.map((t, i) => `<div class="d-flex justify-content-between"><span class="t-red">${i < 11 ? '70,500' : '1,170,500'}</span><span class="t-blue">${t}</span></div>`).join('');

const buyBook = [
  ['189,100', '0.35%', 0], ['189,000', '0.30%', 0], ['188,900', '0.24%', 0], ['188,800', '-0.14%', 1],
  ['188,700', '-0.27%', 1], ['188,600', '-0.32%', 1], ['188,500', '-0.30%', 1], ['188,400', '-0.60%', 1], ['188,300', '-0.70%', 1]
];
document.getElementById('buyPrices').innerHTML = buyBook.map(r =>
  `<div class="ho-pr ${r[2] ? 'is-blue' : ''}">${r[0]}<small>${r[1]}</small></div>`).join('');

const buyAmts = [['23,124', 8], ['8,774', 4], ['12,409', 6], ['238,201', 33], ['114,014', 18], ['55,052', 10], ['54,505', 10], ['30,227', 7], ['12,110', 10]];
document.getElementById('buyAmts').innerHTML = buyAmts.map(r =>
  `<div class="ho-ask" style="background:linear-gradient(90deg,#3d1118 ${r[1]}px,transparent ${r[1]}px)">${r[0]}</div>`).join('');
</script>
</body>
</html>
